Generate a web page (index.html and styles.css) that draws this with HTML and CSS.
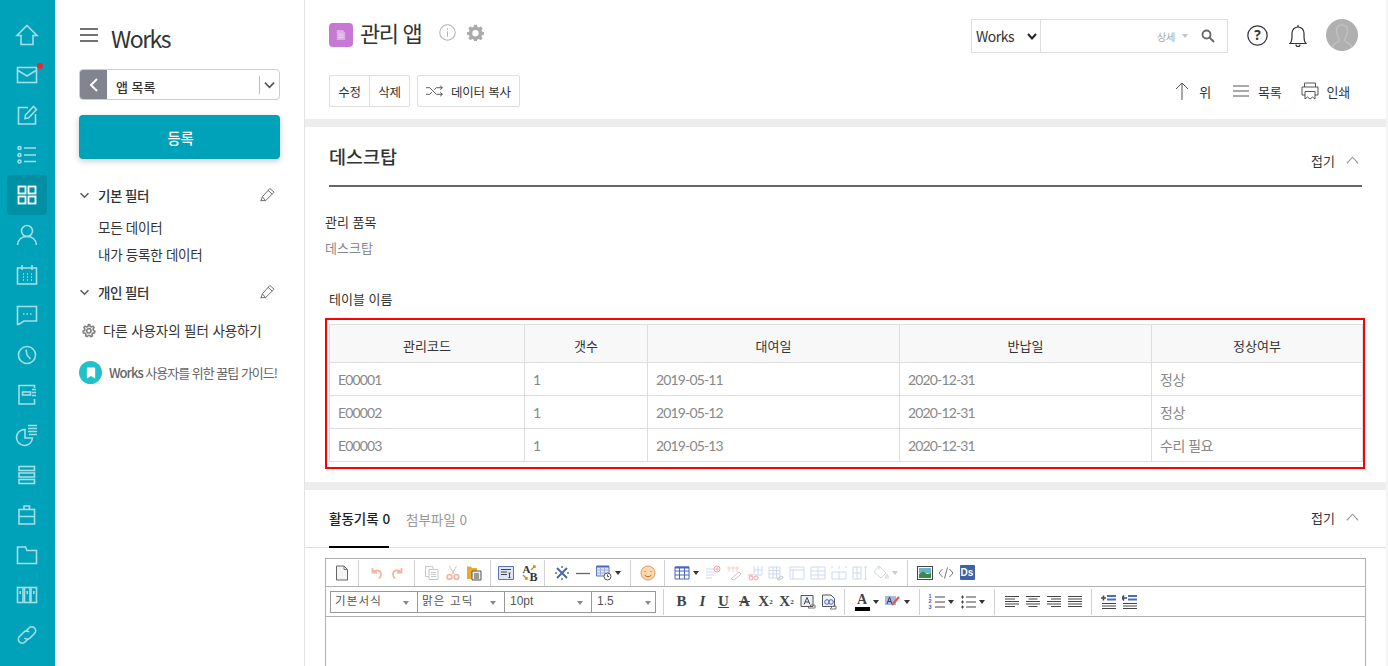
FILE: index.html
```html
<!DOCTYPE html>
<html lang="ko">
<head>
<meta charset="utf-8">
<title>Works</title>
<link rel="stylesheet" href="styles.css">
</head>
<body>
<div class="app">
  <nav class="rail">
    <a class="rail-item"><svg viewBox="0 0 24 24"><path d="M12 2.5 22 12.5H18V21.5H6V12.5H2Z"/></svg></a>
    <a class="rail-item has-dot"><svg viewBox="0 0 24 24"><rect x="2.5" y="4.5" width="19" height="15"/><path d="M3 7.5 12 13 21 7.5"/></svg></a>
    <a class="rail-item"><svg viewBox="0 0 24 24"><path d="M13 4.5H3.5V21H20.5V11"/><path d="M10 15.5 10.5 12 18.5 3.5 21.5 6.500 13.500 15Z"/></svg></a>
    <a class="rail-item"><svg viewBox="0 0 24 24"><circle cx="4.500" cy="5" r="1.500"/><circle cx="4.500" cy="12" r="1.500"/><circle cx="4.500" cy="18.500" r="1.500"/><path d="M9 5H21M9 12H21M9 18.500H21"/></svg></a>
    <a class="rail-item is-active"><svg viewBox="0 0 24 24"><rect x="3.500" y="3.500" width="7" height="7"/><rect x="13.500" y="3.500" width="7" height="7"/><rect x="3.500" y="13.500" width="7" height="7"/><rect x="13.500" y="13.500" width="7" height="7"/></svg></a>
    <a class="rail-item"><svg viewBox="0 0 24 24"><circle cx="12" cy="8" r="5.500"/><path d="M2.500 22C3 16.500 7 13.500 12 13.500S21 16.500 21.500 22"/></svg></a>
    <a class="rail-item"><svg viewBox="0 0 24 24"><rect x="2.500" y="5" width="19" height="16"/><path d="M7 2V7M17 2V7"/><path class="dots" d="M8 11H9M12 11H13M16 11H17M8 14H9M12 14H13M16 14H17M8 17H9M12 17H13M16 17H17"/></svg></a>
    <a class="rail-item"><svg viewBox="0 0 24 24"><path d="M2.500 3.500H21.500V18H9L3.500 21.500H2.500Z"/><path class="dots" d="M8 11H9.500M11.500 11H13M15 11H16.500"/></svg></a>
    <a class="rail-item"><svg viewBox="0 0 24 24"><circle cx="12" cy="12" r="8.500"/><path d="M11 6.500 12 12 15.500 16"/></svg></a>
    <a class="rail-item"><svg viewBox="0 0 24 24"><path d="M19.500 5V2.500H4V21H19.500V16"/><rect x="7.500" y="9" width="8" height="3"/><path d="M17 6.500H21M17 9.500H21M17 12.500H21"/></svg></a>
    <a class="rail-item"><svg viewBox="0 0 24 24"><path d="M10 6.500A8 8 0 1 0 17.500 15H10Z"/><path d="M13 2.500H22M13 5.500H22M13 8.500H22M14 11.500H22"/></svg></a>
    <a class="rail-item"><svg viewBox="0 0 24 24"><rect x="4" y="3.500" width="15.500" height="4"/><rect x="4" y="10" width="15.500" height="4"/><rect x="4" y="16.500" width="15.500" height="4"/></svg></a>
    <a class="rail-item"><svg viewBox="0 0 24 24"><rect x="4" y="6.500" width="15.500" height="14.500"/><path d="M9 6.500V3H14.500V6.500M4 13.500H19.500"/></svg></a>
    <a class="rail-item"><svg viewBox="0 0 24 24"><path d="M2.500 4H10.500L12 7.500H21.500V20.500H2.500Z"/></svg></a>
    <a class="rail-item"><svg viewBox="0 0 24 24"><rect x="2.500" y="4.500" width="5.500" height="15"/><rect x="9.500" y="4.500" width="5.500" height="15"/><rect x="16" y="4.500" width="5.500" height="15"/><path d="M5.200 8V11M12.200 8V11M18.800 8V11"/></svg></a>
    <a class="rail-item"><svg viewBox="0 0 24 24"><path d="M10.500 8.500 14 5A3.800 3.800 0 0 1 19.500 10.500L15 15A3.800 3.800 0 0 1 9.500 15"/><path d="M14 9A3.800 3.800 0 0 0 9 9L4.500 13.500A3.800 3.800 0 0 0 10 19L13.500 15.500"/></svg></a>
  </nav>

  <aside class="side">
    <div class="side-head">
      <svg class="burger" viewBox="0 0 18 14"><path d="M0 1H18M0 7H18M0 13H18"/></svg>
      <span class="side-title">Works</span>
    </div>
    <div class="app-select">
      <span class="back"><svg viewBox="0 0 10 14"><path d="M8 1 2 7 8 13"/></svg></span>
      <span class="app-select-label">앱 목록</span>
      <span class="app-select-arrow"><svg viewBox="0 0 12 8"><path d="M1 1.500 6 6.500 11 1.500"/></svg></span>
    </div>
    <button class="primary">등록</button>

    <div class="filter-head">
      <svg class="fold" viewBox="0 0 12 8"><path d="M1.500 1.500 6 6 10.500 1.500"/></svg>
      <span class="filter-name">기본 필터</span>
      <svg class="pencil" viewBox="0 0 16 16"><path d="M1 15 2.500 10.500 10.500 1.500 15 5.500 6 14.500H1ZM2.500 10.500 6 14.500M8.500 3.500 13 7.500"/></svg>
    </div>
    <a class="filter-item">모든 데이터</a>
    <a class="filter-item">내가 등록한 데이터</a>
    <div class="filter-head second">
      <svg class="fold" viewBox="0 0 12 8"><path d="M1.500 1.500 6 6 10.500 1.500"/></svg>
      <span class="filter-name">개인 필터</span>
      <svg class="pencil" viewBox="0 0 16 16"><path d="M1 15 2.500 10.500 10.500 1.500 15 5.500 6 14.500H1ZM2.500 10.500 6 14.500M8.500 3.500 13 7.500"/></svg>
    </div>
    <a class="other-filter">
      <svg class="gear-small" viewBox="0 0 24 24"><path d="M12 2.500 14 2.800 14.700 5.400 16.600 6.300 19.100 5.200 20.800 7.400 19.400 9.800 19.900 11.900 22.200 13.100 21.700 15.800 19 16.200 17.700 17.900 18.200 20.500 15.800 21.800 13.900 19.900 11.700 20 9.800 21.800 7.400 20.500 7.900 17.900 6.500 16.200 3.800 15.700 3.400 13 5.700 11.800 6.200 9.700 4.800 7.300 6.600 5.200 9.100 6.300 11 5.400Z"/><circle cx="12.500" cy="12.500" r="3.500"/></svg>
      <span>다른 사용자의 필터 사용하기</span>
    </a>
    <a class="tip">
      <span class="tip-badge"><svg viewBox="0 0 12 14"><path d="M1 1.500Q1 .5 2 .5H10Q11 .5 11 1.500V13.500L6 10.500 1 13.500Z"/></svg></span>
      <span class="tip-text"><b>Works</b> 사용자를 위한 꿀팁 가이드!</span>
    </a>
  </aside>

  <main class="main">
    <header class="page-head">
      <div class="head-top">
        <span class="app-icon"><svg viewBox="0 0 12 14"><path d="M1 1H8L11 4V13H1Z"/><path class="ln" d="M3 6H9M3 8H9M3 10H9"/></svg></span>
        <h1 class="page-title">관리 앱</h1>
        <svg class="info" viewBox="0 0 16 16"><circle cx="8" cy="8" r="7.300"/><path d="M8 7V12"/><path d="M8 4V5.500"/></svg>
        <svg class="gear" viewBox="0 0 24 24"><path fill-rule="evenodd" d="M10 1H14L14.600 4 16.900 5 19.500 3.300 22.200 6.300 20.400 8.700 21.200 10.800 24 11.500V15L21.200 15.500 20.400 17.800 22 20.300 19.200 23 16.800 21.200 14.500 22 14 24H10L9.500 22 7.200 21.200 4.800 23 2 20.300 3.600 17.800 2.800 15.500 0 15V11.500L2.800 10.800 3.600 8.700 1.800 6.300 4.500 3.300 7.100 5 9.400 4ZM12 8.500A4.500 4.500 0 1 0 12 17.500 4.500 4.500 0 1 0 12 8.500Z"/></svg>
        <div class="search">
          <span class="search-scope">Works<svg viewBox="0 0 10 7"><path d="M1 1 5 5.500 9 1"/></svg></span>
          <span class="search-input"></span>
          <span class="search-detail">상세</span>
          <span class="search-caret"></span>
          <svg class="search-icon" viewBox="0 0 14 14"><circle cx="5.500" cy="5.500" r="4"/><path d="M8.500 8.500 13 13"/></svg>
        </div>
        <svg class="help" viewBox="0 0 20 20"><circle cx="10" cy="10" r="9.200"/><text x="10" y="14.500" text-anchor="middle">?</text></svg>
        <svg class="bell" viewBox="0 0 18 24"><path d="M1 19.500C2.500 18 3 17 3 12V9A6 6 0 0 1 15 9V12C15 17 15.500 18 17 19.500Z"/><path d="M9 1V3M7 20.500A2 2 0 0 0 11 20.500"/></svg>
        <span class="avatar"><svg viewBox="0 0 32 32"><path d="M6 29C7 24 11 24 13 22V19C11 17 10.500 14 10.500 12 10.500 8 13 6 16 6S21.500 8 21.500 12C21.500 14 21 17 19 19V22C21 24 25 24 26 29"/></svg></span>
      </div>
      <div class="head-actions">
        <div class="btn-group"><button class="btn">수정</button><button class="btn">삭제</button></div>
        <button class="btn btn-copy"><svg class="shuffle" viewBox="0 0 18 12"><path d="M0 2.500H4L11 9.500H17M0 9.500H4L6.500 7M9 4.500 11 2.500H17M15 .5 17.500 2.500 15 4.500M15 7.500 17.500 9.500 15 11.500"/></svg>데이터 복사</button>
        <div class="actions-right">
          <a class="act"><svg class="act-up" viewBox="0 0 14 18"><path d="M7 18V1M1 7 7 1 13 7"/></svg>위</a>
          <a class="act"><svg class="act-list" viewBox="0 0 16 12"><path d="M0 1H16M0 6H16M0 11H16"/></svg>목록</a>
          <a class="act"><svg class="act-print" viewBox="0 0 18 18"><path d="M3.500 5V1H14.500V5M4 13H1V5H17V13H14M4 9.500H14V17L11.500 15 9 17 6.500 15 4 17Z"/></svg>인쇄</a>
        </div>
      </div>
    </header>

    <section class="card">
      <div class="card-head">
        <h2 class="card-title">데스크탑</h2>
        <a class="fold-link">접기<svg viewBox="0 0 14 8"><path d="M1 7.500 7 1 13 7.500"/></svg></a>
      </div>
      <div class="field">
        <div class="field-label">관리 품목</div>
        <div class="field-value">데스크탑</div>
      </div>
      <div class="table-label">테이블 이름</div>
      <div class="table-box">
        <table class="data">
          <colgroup><col class="c1"><col class="c2"><col class="c3"><col class="c4"><col class="c5"></colgroup>
          <thead><tr><th>관리코드</th><th>갯수</th><th>대여일</th><th>반납일</th><th>정상여부</th></tr></thead>
          <tbody>
            <tr><td>E00001</td><td>1</td><td>2019-05-11</td><td>2020-12-31</td><td class="ko">정상</td></tr>
            <tr><td>E00002</td><td>1</td><td>2019-05-12</td><td>2020-12-31</td><td class="ko">정상</td></tr>
            <tr><td>E00003</td><td>1</td><td>2019-05-13</td><td>2020-12-31</td><td class="ko">수리 필요</td></tr>
          </tbody>
        </table>
      </div>
    </section>

    <section class="card activity">
      <div class="tabs">
        <a class="tab is-on">활동기록 0</a>
        <a class="tab">첨부파일 0</a>
        <a class="fold-link">접기<svg viewBox="0 0 14 8"><path d="M1 7.500 7 1 13 7.500"/></svg></a>
      </div>
      <div class="editor">
        <div class="tb-row">
          <div class="tb-group g-new">
            <span class="tb"><svg viewBox="0 0 16 16"><path class="doc" d="M2.500 1H10L13.500 4.500V15H2.500Z"/><path class="s-gray" d="M10 1V4.500H13.500"/></svg></span>
          </div>
          <div class="tb-group g-undo">
            <span class="tb"><svg viewBox="0 0 16 16"><path class="s-salmon" d="M4.500 3V7.500H9M4.800 7C7 4.500 13 4.500 13 9.500 13 11 12 12.500 11 13.500"/></svg></span>
            <span class="tb"><svg viewBox="0 0 16 16"><path class="s-salmon" d="M11.500 3V7.500H7M11.200 7C9 4.500 3 4.500 3 9.500 3 11 4 12.500 5 13.500"/></svg></span>
          </div>
          <div class="tb-group">
            <span class="tb"><svg viewBox="0 0 16 16"><path class="s-faint" d="M1.500 1.500H9V11.500H1.500Z"/><path class="s-faint f-white" d="M5 4.500H14V14.500H5Z"/><path class="s-faint" d="M7 7.500H12M7 9.500H12M7 11.500H12"/></svg></span>
            <span class="tb"><svg viewBox="0 0 16 16"><path class="s-faint" d="M4.500 1 9 9M11.500 1 7 9"/><circle class="s-salmon" cx="4.500" cy="12" r="2.300"/><circle class="s-salmon" cx="11.500" cy="12" r="2.300"/></svg></span>
            <span class="tb"><svg viewBox="0 0 16 16"><path class="f-gold" d="M1 1.500H5L6 3H11V7H6V14H1Z"/><path class="f-page" d="M6 6H15V15H6Z"/><path class="s-dark" d="M8 9H13M8 11H13M8 13H13"/></svg></span>
          </div>
          <div class="tb-group g-tmpl">
            <span class="tb"><svg viewBox="0 0 16 16"><path class="f-pale" d="M.5 1.500H15.500V14.500H.5Z"/><path class="s-dark" d="M3 4.500H13M3 7H9M3 9.500H9M11.500 8V12.500M10.500 8H12.500M10.500 12.500H12.500"/></svg></span>
            <span class="tb tb-ab"><span class="ab-a">A</span><span class="ab-b">B</span><svg viewBox="0 0 16 16"><path class="s-orange" d="M10 5 14 1M12 1H14V3M2 10 6 14M4 14H6V12"/></svg></span>
          </div>
          <div class="tb-group">
            <span class="tb"><svg viewBox="0 0 16 16"><path class="s-navy-w" d="M3 3 13 13M13 3 3 13"/><path class="s-navy" d="M8 1V3M8 13V15M1 8H3M13 8H15"/></svg></span>
            <span class="tb"><svg viewBox="0 0 16 16"><path class="s-gray-w" d="M1 8.500H15"/></svg></span>
            <span class="tb"><svg viewBox="0 0 16 16"><path class="f-pale" d="M.5 1.500H13V11H.5Z"/><path class="s-blue-w" d="M.5 1.500H13"/><path class="s-faint-b" d="M.5 5H13M.5 8H13M4.500 2V11M8.500 2V11"/><circle class="clock" cx="11.500" cy="11.500" r="3.500"/><path class="s-dark" d="M11.500 9.500V11.500H13"/></svg></span>
            <span class="caret"></span>
          </div>
          <div class="tb-group">
            <span class="tb"><svg viewBox="0 0 16 16"><circle class="smile" cx="8" cy="8" r="7"/><path class="s-brown" d="M5 6V7M11 6V7M4.500 10Q8 13.500 11.500 10"/></svg></span>
          </div>
          <div class="tb-group">
            <span class="tb"><svg viewBox="0 0 16 16"><path class="f-white s-blue" d="M1 2H15V14H1Z"/><path class="s-blue-w" d="M1 2.500H15"/><path class="s-blue" d="M1 6H15M1 10H15M5.500 2V14M10.500 2V14"/></svg></span>
            <span class="caret"></span>
            <span class="tb"><svg viewBox="0 0 16 16"><path class="s-lav" d="M1 4H9M1 7H9M1 10H9M1 13H7"/><circle class="s-pink" cx="12" cy="4" r="3"/><path class="s-pink" d="M12 2.500V5.500M10.500 4H13.500"/></svg></span>
            <span class="tb"><svg viewBox="0 0 16 16"><path class="s-pinklight" d="M3 1V7M7 1V7M11 1V7M1 3H13"/><path class="s-faint" d="M5 14 13 7 15 9 8 15Z"/></svg></span>
            <span class="tb"><svg viewBox="0 0 16 16"><path class="s-lav" d="M7 1V10H15V1M11 1V10M7 5H15"/><path class="s-pink" d="M1 10H6"/><circle class="s-pink" cx="4" cy="13" r="2"/><circle class="s-pink" cx="9" cy="13" r="2"/></svg></span>
            <span class="tb"><svg viewBox="0 0 16 16"><path class="s-lav" d="M1 2H12V13H1ZM1 5.500H12M1 9H12M5 2V13M8.500 2V13"/><path class="s-faint" d="M9 14 14 11 15 13 11 15Z"/></svg></span>
            <span class="tb"><svg viewBox="0 0 16 16"><path class="s-lav" d="M1 2H15V14H1ZM1 5H15M4 5V14"/></svg></span>
            <span class="tb"><svg viewBox="0 0 16 16"><path class="s-lav" d="M1 2H15V14H1ZM1 6H15M1 10H15M8 2V14"/></svg></span>
            <span class="tb"><svg viewBox="0 0 16 16"><path class="s-lav" d="M1 7H15V14H1ZM8 7V14M1 3V1M15 3V1M8 4V1"/></svg></span>
            <span class="tb"><svg viewBox="0 0 16 16"><path class="s-lav" d="M1 2H9V14H1ZM1 8H9M5 2V14M12 2H15M13.500 2V14M12 14H15"/></svg></span>
            <span class="tb"><svg viewBox="0 0 16 16"><path class="s-lav" d="M6 1 13 8 8 13 1 7Z"/><path class="s-lav" d="M6 1V5"/><path class="s-lavlight" d="M14 9 16 13H12Z"/></svg></span>
            <span class="caret caret-faint"></span>
          </div>
          <div class="tb-group g-last">
            <span class="tb"><svg viewBox="0 0 16 16"><rect class="frame" x=".5" y="1.500" width="15" height="13"/><path class="f-sky" d="M2 3H14V8H2Z"/><path class="f-hill" d="M2 13V9L6 6.500 10 9 14 8V13Z"/></svg></span>
            <span class="tb"><svg viewBox="0 0 16 16"><path class="s-gray" d="M4.500 4 1 8 4.500 12M11.500 4 15 8 11.500 12M9.500 2.500 6.500 13.500"/></svg></span>
            <span class="tb ds"><span>Ds</span></span>
          </div>
        </div>
        <div class="tb-row tb-row2">
          <div class="selects">
            <span class="sel s-1">기본서식</span>
            <span class="sel s-2">맑은 고딕</span>
            <span class="sel s-3">10pt</span>
            <span class="sel s-4">1.5</span>
          </div>
          <div class="tb-group g-fmt">
            <span class="tb tx tx-b">B</span>
            <span class="tb tx tx-i">I</span>
            <span class="tb tx tx-u">U</span>
            <span class="tb tx tx-s">A</span>
            <span class="tb tx tx-x">X<sup>2</sup></span>
            <span class="tb tx tx-x">X<sub>2</sub></span>
            <span class="tb"><svg viewBox="0 0 16 16"><path class="s-dark-t" d="M1 1.500H13V12.500H1Z"/><path class="s-dark" d="M7 3.500 4 10.500M7 3.500 10 10.500M5 8H9"/><path class="s-gray" d="M8 14 11 11H15V14Z"/></svg></span>
            <span class="tb"><svg viewBox="0 0 16 16"><path class="s-dark-t" d="M1.500 1H10L13.500 4.500V12.500H1.500Z"/><circle class="s-blue" cx="6" cy="8" r="2.300"/><circle class="s-blue" cx="10" cy="8" r="2.300"/><path class="s-gray" d="M9 15 12 12H15V15Z"/></svg></span>
          </div>
          <div class="tb-group">
            <span class="tb tx tx-color">A</span>
            <span class="caret"></span>
            <span class="tb"><svg viewBox="0 0 16 16"><path class="f-lav" d="M0 2H11V11H0Z"/><path class="s-dark" d="M4.500 3 2 10M4.500 3 7 10M3 7.500H6"/><path class="s-hl" d="M7 11 14 3"/></svg></span>
            <span class="caret"></span>
          </div>
          <div class="tb-group">
            <span class="tb"><span class="nums">1<br>2<br>3</span><svg viewBox="0 0 16 16"><path class="s-dark" d="M6 3H16M6 8H16M6 13H16"/></svg></span>
            <span class="caret"></span>
            <span class="tb"><svg viewBox="0 0 16 16"><path class="s-dark" d="M6 3H16M6 8H16M6 13H16M1 3H4M2.500 1.500V4.500M1 8H4M2.500 6.500V9.500M1 13H4M2.500 11.500V14.500"/></svg></span>
            <span class="caret"></span>
          </div>
          <div class="tb-group">
            <span class="tb"><svg viewBox="0 0 16 14"><path class="s-dark" d="M1 1.500H15M1 4H11M1 6.500H15M1 9H15M1 11.500H11"/></svg></span>
            <span class="tb"><svg viewBox="0 0 16 14"><path class="s-dark" d="M1 1.500H15M3.500 4H12.500M1 6.500H15M1 9H15M3.500 11.500H12.500"/></svg></span>
            <span class="tb"><svg viewBox="0 0 16 14"><path class="s-dark" d="M1 1.500H15M5 4H15M1 6.500H15M1 9H15M5 11.500H15"/></svg></span>
            <span class="tb"><svg viewBox="0 0 16 14"><path class="s-dark" d="M1 1.500H15M1 4H15M1 6.500H15M1 9H15M1 11.500H15"/></svg></span>
          </div>
          <div class="tb-group g-last">
            <span class="tb"><svg viewBox="0 0 16 14"><path class="s-dark2" d="M0 3H5M2.500 .5V5.500"/><path class="f-indent" d="M6 0H15V2H6ZM6 3.500H15V5.500H6Z"/><path class="s-dark" d="M1 8.500H15M1 11H15M1 13.500H15"/></svg></span>
            <span class="tb"><svg viewBox="0 0 16 14"><path class="s-dark2" d="M5 3H0M2 .5 0 3 2 5.500"/><path class="f-indent" d="M6 0H15V2H6ZM6 3.500H15V5.500H6Z"/><path class="s-dark" d="M1 8.500H15M1 11H15M1 13.500H15"/></svg></span>
          </div>
        </div>
        <div class="editor-body"></div>
      </div>
    </section>
  </main>
  <div class="edge"></div>
</div>
</body>
</html>
```

FILE: styles.css
```css
* { box-sizing: border-box; }
html, body { margin: 0; height: 100%; overflow: hidden; background: #fff; }
body { font-family: "Noto Sans CJK KR", "Noto Sans", sans-serif; color: #333; font-size: 13px; }
a { color: inherit; text-decoration: none; }
button { font: inherit; color: inherit; cursor: pointer; }
h1, h2 { margin: 0; font-weight: 400; }
svg { display: block; fill: none; }

.app { display: flex; width: 1388px; height: 666px; overflow: hidden; }

/* rail */
.rail { width: 55px; flex: none; background: #00a2b9; padding: 15px 0 0 7px; display: flex; flex-direction: column; align-items: flex-start; }
.rail-item { position: relative; width: 40px; height: 40px; flex: none; display: flex; align-items: center; justify-content: center; border-radius: 4px; }
.rail-item svg { width: 24px; height: 24px; stroke: #a4dde6; stroke-width: 1.6; }
.rail-item svg .dots { stroke-width: 1.5; }
.rail-item.is-active { background: #008fa3; }
.rail-item.is-active svg { stroke: #fff; stroke-width: 1.8; }
.has-dot::after { content: ""; position: absolute; left: 30px; top: 8px; width: 6px; height: 6px; border-radius: 50%; background: #f0242c; }

/* sidebar */
.side { width: 250px; flex: none; border-right: 1px solid #e3e3e3; padding: 0 24px; display: flex; flex-direction: column; }
.side-head { height: 69px; display: flex; align-items: center; padding-top: 7px; }
.burger { width: 18px; height: 14px; margin: -6px 0 0 1px; stroke: #444; stroke-width: 1.6; }
.side-title { margin-left: 13px; font-size: 23px; color: #333; letter-spacing: -1.5px; }
.app-select { height: 31px; border: 1px solid #ccccd2; border-radius: 4px; display: flex; align-items: center; overflow: hidden; width: 201px; }
.back { width: 27px; height: 31px; background: #82848f; display: flex; align-items: center; justify-content: center; }
.back svg { width: 10px; height: 14px; stroke: #fff; stroke-width: 2; }
.app-select-label { margin-left: 9px; padding-top: 4px; flex: 1; font-size: 13px; font-weight: 500; color: #333; }
.app-select-arrow { width: 20px; height: 18px; border-left: 1px solid #bbb; display: flex; align-items: center; justify-content: center; }
.app-select-arrow svg { width: 11px; height: 8px; stroke: #555; stroke-width: 1.800; }
.primary { height: 44px; width: 201px; margin-top: 15px; padding: 0 0 0 2px; border: 0; border-radius: 4px; background: #00a2b9; color: #fff; font-size: 14.500px; font-weight: 500; box-shadow: 0 2px 6px rgba(0,0,0,.22); }
.filter-head { display: flex; align-items: center; height: 20px; margin-top: 26px; }
.filter-head.second { margin-top: 14px; }
.fold { width: 11px; height: 7px; stroke: #555; stroke-width: 1.600; }
.filter-name { margin-left: 8px; font-size: 13.500px; font-weight: 500; color: #333; flex: 1; letter-spacing: -.5px; }
.pencil { width: 15px; height: 15px; margin-right: 5px; margin-top: -1px; stroke: #666; stroke-width: 1; }
.filter-item { display: block; margin-left: 19px; font-size: 13.500px; line-height: 27px; color: #333; letter-spacing: -.25px; }
.filter-item:first-of-type { margin-top: 9px; }
.other-filter { display: flex; align-items: center; margin-top: 18px; height: 20px; font-size: 13.500px; color: #333; letter-spacing: -.12px; }
.gear-small { width: 15px; height: 15px; margin: 0 7px 0 2px; stroke: #808080; stroke-width: 2.600; }
.tip { display: flex; align-items: center; margin-top: 21px; height: 23px; color: #666; }
.tip-badge { width: 23px; height: 23px; border-radius: 50%; background: #22c0cb; display: flex; align-items: center; justify-content: center; flex: none; }
.tip-badge svg { width: 10px; height: 12px; fill: #fff; }
.tip-text { margin-left: 7px; font-size: 13px; letter-spacing: -1px; white-space: nowrap; }
.tip-text b { font-weight: 500; }

/* main */
.main { width: 1081px; flex: none; display: flex; flex-direction: column; background: #ededed; }
.edge { flex: 1; background: #f4f4f4; }
.page-head { background: #fff; height: 119px; padding: 19px 28px 0 24px; margin-bottom: 8px; }
.head-top { display: flex; align-items: flex-start; height: 34px; }
.app-icon { width: 24px; height: 24px; margin-top: 4px; border-radius: 4px; background: #c678d4; display: flex; align-items: center; justify-content: center; }
.app-icon svg { width: 10px; height: 12px; fill: #dcaee5; }
.app-icon .ln { stroke: #f0def4; stroke-width: .8; }
.page-title { margin-left: 7px; font-size: 22px; line-height: 28px; margin-top: -1px; color: #333; letter-spacing: -1.4px; }
.info { width: 17px; height: 17px; margin: 5px 0 0 18px; stroke: #b3b3b3; stroke-width: 1; }
.gear { width: 17px; height: 17px; margin: 5px 0 0 11px; fill: #aaa; }
.search { margin-left: auto; width: 257px; height: 34px; border: 1px solid #ddd; display: flex; align-items: center; }
.search-scope { width: 69px; height: 32px; border-right: 1px solid #ddd; display: flex; align-items: center; padding-left: 4px; font-size: 14px; color: #333; letter-spacing: -.5px; }
.search-scope svg { width: 10px; height: 7px; margin-left: 13px; stroke: #222; stroke-width: 2; }
.search-input { flex: 1; }
.search-detail { font-size: 10.500px; color: #aaa; letter-spacing: -.5px; }
.search-caret { width: 0; height: 0; margin-left: 7px; border: 3.500px solid transparent; border-top: 4px solid #c4c4c4; border-bottom: 0; }
.search-icon { width: 14px; height: 14px; margin: 0 12px 0 13px; stroke: #666; stroke-width: 1.800; }
.help { width: 21px; height: 21px; margin: 6px 0 0 19px; stroke: #333; stroke-width: 1.200; }
.help text { font: 700 13px "Noto Sans", sans-serif; fill: #333; stroke: none; }
.bell { width: 18px; height: 24px; margin: 5px 0 0 21px; stroke: #333; stroke-width: 1.200; }
.avatar { width: 32px; height: 32px; margin-left: 19px; border-radius: 50%; background: #b0b0b0; overflow: hidden; }
.avatar svg { width: 32px; height: 32px; stroke: #c2c2c2; stroke-width: 1.300; }

.head-actions { display: flex; align-items: center; margin-top: 22px; height: 32px; }
.btn-group { display: flex; }
.btn { height: 32px; padding: 0 8px; background: #fff; border: 1px solid #ddd; border-radius: 2px; font-size: 12.500px; color: #333; letter-spacing: -.2px; }
.btn-group .btn { width: 41px; padding: 0; }
.btn-group .btn:first-child { border-right: 0; width: 40px; border-radius: 2px 0 0 2px; }
.btn-group .btn:last-child { border-radius: 0 2px 2px 0; }
.btn-copy { width: 103px; margin-left: 7px; display: flex; align-items: center; padding-left: 8px; }
.shuffle { width: 17px; height: 12px; margin-right: 8px; stroke: #555; stroke-width: 1; }
.actions-right { margin-left: auto; display: flex; align-items: center; margin-right: 8px; }
.act { display: flex; align-items: center; font-size: 13px; color: #333; margin-left: 21px; letter-spacing: -.2px; }
.act-up { width: 14px; height: 18px; margin-right: 10px; stroke: #555; stroke-width: 1; }
.act-list { width: 16px; height: 12px; margin: 0 9px 0 1px; stroke: #555; stroke-width: 1; }
.act-print { width: 18px; height: 18px; margin: 0 7px 0 -1px; stroke: #555; stroke-width: 1; }

.card { background: #fff; }
.card:first-of-type { height: 355px; }
.card-head { height: 60px; margin: 0 24px; border-bottom: 2px solid #666; display: flex; justify-content: space-between; }
.card-title { font-size: 18.500px; font-weight: 500; color: #333; line-height: 58px; }
.fold-link { display: flex; align-items: center; font-size: 13px; color: #333; }
.card-head .fold-link { margin-top: 8px; height: 50px; }
.fold-link svg { width: 13px; height: 8px; margin-left: 11px; margin-right: 3px; stroke: #999; stroke-width: 1.200; }
.field { margin: 25px 0 0 20px; font-size: 13px; }
.field-label { line-height: 20px; color: #333; }
.field-value { line-height: 20px; margin-top: 6px; color: #888; }
.table-label { margin: 31px 0 0 24px; line-height: 20px; font-size: 13px; color: #333; }
.table-box { margin: 9px 21px 0 20px; height: 151px; border: 2px solid #f00; padding: 4px 0 0 2px; }
.data { width: 1033px; table-layout: fixed; border-collapse: collapse; }
.c1 { width: 195px; } .c2 { width: 123px; } .c3 { width: 252px; } .c4 { width: 252px; } .c5 { width: 211px; }
.data th, .data td { border: 1px solid #ddd; padding: 0; }
.data th { height: 38px; background: #f8f8f8; font-weight: 400; font-size: 13px; color: #333; padding-top: 4px; }
.data td { height: 33px; padding-left: 8px; font-family: "Lato", "Noto Sans CJK KR", sans-serif; font-size: 14px; color: #888; letter-spacing: -.85px; }
.data td.ko { letter-spacing: -.4px; }

.activity { flex: 1; margin-top: 8px; min-height: 0; }
.tabs { height: 58px; border-bottom: 1px solid #ddd; margin-bottom: 10px; padding: 0 24px; display: flex; }
.tab { height: 58px; display: flex; align-items: center; font-size: 13.500px; color: #999; margin-right: 17px; }
.tab.is-on { color: #222; font-weight: 500; border-bottom: 2px solid #000; width: 60px; white-space: nowrap; }
.tabs .fold-link { margin-left: auto; height: 54px; }

.editor { margin: 0 20px; width: 1041px; border: 1px solid #b0b0b0; border-bottom: 0; height: 108px; background: #fff; }
.tb-row { height: 28px; border-bottom: 1px solid #b0b0b0; display: flex; align-items: center; padding-left: 5.500px; }
.tb-row2 { height: 30px; padding-left: 4px; }
.tb-group { display: flex; align-items: center; height: 26px; border-right: 1px solid #d0d0d0; padding: 0 5.500px 0 6.500px; }
.tb-group.g-last { border-right: 0; }
.g-new { padding-left: 0; }
.tb { width: 21px; height: 20px; display: flex; align-items: center; justify-content: center; position: relative; flex: none; }
.tb svg { width: 16px; height: 16px; stroke-width: 1; }
.g-undo { padding-left: 5.500px; }
.g-undo .tb { width: 22px; }
.g-tmpl { padding: 0 4.500px; }
.g-tmpl .tb-ab { margin-left: 2px; }
.caret { width: 0; height: 0; border: 3px solid transparent; border-top: 4px solid #333; border-bottom: 0; margin: 1px 3.500px 0 .5px; flex: none; }
.caret-faint { border-top-color: #ccc; }
.doc { stroke: #666; fill: #f4f4f4; }
.s-gray { stroke: #777; }
.s-salmon { stroke: #f0b8a0; stroke-width: 1.800; }
.s-faint { stroke: #c8c8c8; }
.s-faint-b { stroke: #a0b0d8; }
.f-white { fill: #fff; }
.f-gold { fill: #eca92c; }
.f-page { fill: #f0f0f0; stroke: #555; }
.s-dark { stroke: #444; }
.s-dark-t { stroke: #555; fill: #eef2fa; }
.s-dark2 { stroke: #3c4a6a; stroke-width: 1.600; }
.f-pale { fill: #dfe6f6; stroke: #5876b8; }
.s-orange { stroke: #e77b1e; stroke-width: 1.300; }
.tb-ab { font-family: "Liberation Serif", serif; font-weight: 700; color: #333; }
.tb-ab svg { position: absolute; left: 2px; top: 2px; }
.ab-a { position: absolute; left: 4px; top: 0; font-size: 11px; line-height: 12px; }
.ab-b { position: absolute; left: 11px; top: 8px; font-size: 12px; line-height: 12px; }
.s-navy { stroke: #5a6f9e; stroke-width: 1.500; }
.s-navy-w { stroke: #4a6aa8; stroke-width: 2; }
.s-gray-w { stroke: #666; stroke-width: 1.300; }
.s-blue-w { stroke: #4a68b8; stroke-width: 2; }
.s-blue { stroke: #4a68b8; }
.clock { fill: #fff; stroke: #555; }
.smile { fill: #fbd9ae; stroke: #e09a60; }
.s-brown { stroke: #b4622c; }
.s-lav { stroke: #d0d8ee; }
.s-lavlight { stroke: #dcdcdc; fill: #eee; }
.s-pink { stroke: #f4a0a4; }
.s-pinklight { stroke: #f8cfcf; }
.frame { fill: #fff; stroke: #444; }
.f-sky { fill: #6db4c8; }
.f-hill { fill: #3c8a40; }
.ds span { width: 15px; height: 15px; background: #3c62a8; color: #fff; font: 700 10px/15px "Liberation Sans", sans-serif; text-align: center; display: block; border-radius: 1px; }

.selects { display: flex; height: 22px; border: 1px solid #999; }
.sel { position: relative; height: 20px; border-right: 1px solid #999; font-family: "Noto Sans CJK KR", sans-serif; font-size: 11.500px; line-height: 16px; color: #555; padding-left: 4px; letter-spacing: 1.200px; }
.sel:last-child { border-right: 0; }
.sel::after { content: ""; position: absolute; right: 8px; top: 9px; border: 3.500px solid transparent; border-top: 4px solid #888; border-bottom: 0; }
.s-1 { width: 87px; } .s-2 { width: 87px; }
.s-3 { width: 87px; padding-left: 5px; font-family: "Liberation Sans", sans-serif; letter-spacing: 0; font-size: 12px; line-height: 18px; }
.s-4 { width: 63px; padding-left: 5px; font-family: "Liberation Sans", sans-serif; letter-spacing: 0; font-size: 12px; line-height: 18px; }
.s-4::after { right: 4px; }
.g-fmt { margin-left: 7px; padding: 0 5px 0 7px; border-left: 1px solid #d0d0d0; }
.tx { font-family: "Liberation Serif", serif; font-weight: 700; font-size: 15px; color: #444; }
.tx sup, .tx sub { font-size: 7px; line-height: 0; }
.tx-i { font-style: italic; }
.tx-u { text-decoration: underline; }
.tx-s { text-decoration: line-through; }
.tb.tx-color { width: 15px; height: 18px; margin: 0 3px; font-size: 14px; line-height: 12px; padding-bottom: 4px; box-shadow: inset 0 -4px 0 #000; }
.s-hl { stroke: #e0583a; stroke-width: 2; }
.f-lav { fill: #a8b8e8; }
.nums { position: absolute; left: 2px; top: 2px; font: 700 5.500px/5.500px "Liberation Sans", sans-serif; color: #3c62a8; }
.f-indent { fill: #4a6db8; }
```
